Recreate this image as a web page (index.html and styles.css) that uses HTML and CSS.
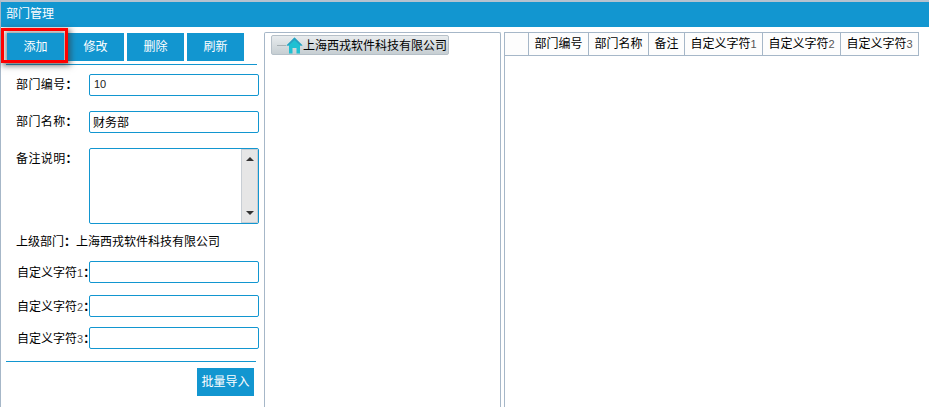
FILE: index.html
```html
<!DOCTYPE html>
<html lang="zh-CN">
<head>
    <meta charset="UTF-8">
    <title>部门管理</title>
    <link rel="stylesheet" href="styles.css">
</head>
<body>
    <div class="window">
        <div class="title">部门管理</div>
        <div class="main">
            <div class="left">
                <div class="toolbar">
                    <button class="button active">添加</button>
                    <button class="button">修改</button>
                    <button class="button">删除</button>
                    <button class="button">刷新</button>
                </div>
                <div class="form">
                    <div class="row">
                        <label>部门编号<span class="colon">：</span></label>
                        <input class="field small" type="text" value="10">
                    </div>
                    <div class="row">
                        <label>部门名称<span class="colon">：</span></label>
                        <input class="field" type="text" value="财务部">
                    </div>
                    <div class="row memo">
                        <label>备注说明<span class="colon">：</span></label>
                        <div class="area">
                            <div class="scroll">
                                <span class="arrow up"></span>
                                <span class="arrow down"></span>
                            </div>
                        </div>
                    </div>
                    <div class="parent">上级部门<span class="colon">：</span>上海西戎软件科技有限公司</div>
                    <div class="row custom">
                        <label>自定义字符<span class="num">1</span><span class="colon">：</span></label>
                        <input class="field" type="text">
                    </div>
                    <div class="row custom tight">
                        <label>自定义字符<span class="num">2</span><span class="colon">：</span></label>
                        <input class="field" type="text">
                    </div>
                    <div class="row custom">
                        <label>自定义字符<span class="num">3</span><span class="colon">：</span></label>
                        <input class="field" type="text">
                    </div>
                </div>
                <div class="footer">
                    <button class="button">批量导入</button>
                </div>
            </div>
            <div class="tree">
                <div class="node">
                    <span class="dash"></span>
                    <svg class="home" width="17" height="17" viewBox="0 0 17 17">
                        <path d="M8.5 0.5 L16.5 8.5 L14 8.5 L14 16.5 L10.5 16.5 L10.5 11 L6.5 11 L6.5 16.5 L3 16.5 L3 8.5 L0.5 8.5 Z" fill="#1fc0d2"/>
                        <path d="M8.5 0.5 L16.5 8.5 L14.5 8.5 L8.5 3 L2.5 8.5 L0.5 8.5 Z" fill="#2a9fc0"/>
                    </svg>
                    <span class="node-text">上海西戎软件科技有限公司</span>
                </div>
            </div>
            <div class="grid">
                <div class="grid-head">
                    <div class="cell c-check"></div>
                    <div class="cell c-60">部门编号</div>
                    <div class="cell c-60">部门名称</div>
                    <div class="cell c-36">备注</div>
                    <div class="cell c-78">自定义字符<span class="num">1</span></div>
                    <div class="cell c-78">自定义字符<span class="num">2</span></div>
                    <div class="cell c-78">自定义字符<span class="num">3</span></div>
                </div>
            </div>
        </div>
    </div>
</body>
</html>
```

FILE: styles.css
```css
html, body {
    margin: 0;
    padding: 0;
    height: 100%;
    overflow: hidden;
}
body {
    font-family: "Liberation Sans", "Noto Sans CJK SC", sans-serif;
    font-size: 12px;
    color: #000;
    background: #fff;
}
.window {
    height: 407px;
    box-sizing: border-box;
    border-left: 1px solid #a6b7c8;
    border-top: 2px solid #b5c2cf;
    display: flex;
    flex-direction: column;
}
.title {
    height: 25px;
    line-height: 24px;
    padding-left: 5px;
    background: #1296d0;
    color: #fff;
}
.main {
    flex: 1;
    display: flex;
    min-height: 0;
}
.left {
    width: 263px;
    flex-shrink: 0;
}
.toolbar {
    display: flex;
    gap: 3px;
    margin: 6px 0 0 5px;
    padding: 0 0 3px 1px;
    width: 250px;
    border-bottom: 1px solid #1296d0;
}
.button {
    width: 57px;
    height: 28px;
    padding: 0 0 3px;
    border: none;
    background: #1296d0;
    color: #fff;
    font: inherit;
}
.active {
    position: relative;
    z-index: 1;
    box-shadow: 0 0 5px 2px rgba(60, 60, 60, 0.55);
}
/* 红色标注框 */
.active::after {
    content: "";
    position: absolute;
    left: -6px;
    top: -5px;
    right: -4px;
    bottom: -2px;
    border: 3px solid #f00;
    box-shadow: 2px 2px 6px 1px rgba(60, 60, 60, 0.55);
}
.form {
    padding-top: 9px;
}
.row {
    display: flex;
    align-items: center;
    height: 22px;
    margin-bottom: 15px;
}
.row label {
    width: 88px;
    padding: 0 0 4px 15px;
    box-sizing: border-box;
    flex-shrink: 0;
    letter-spacing: 0.4px;
}
.colon {
    font-family: "Noto Sans CJK TC", sans-serif;
    font-weight: bold;
}
.field {
    width: 170px;
    height: 22px;
    box-sizing: border-box;
    border: 1px solid #1296d0;
    border-radius: 2px;
    padding: 0 3px 2px;
    font: inherit;
    outline: none;
}
.small {
    font-size: 11px;
    padding: 0 4px 3px;
    color: #222;
}
.memo {
    height: 76px;
    align-items: flex-start;
    margin-bottom: 0;
}
.memo label {
    padding-top: 1px;
}
.area {
    width: 170px;
    height: 76px;
    box-sizing: border-box;
    border: 1px solid #1296d0;
    border-radius: 2px;
    display: flex;
    justify-content: flex-end;
}
.scroll {
    width: 17px;
    background: #e6e6e6;
    border: 1px solid #c8ced4;
    box-sizing: border-box;
    display: flex;
    flex-direction: column;
    justify-content: space-between;
    align-items: center;
    padding: 7px 0;
}
.arrow {
    width: 0;
    height: 0;
    border-left: 4px solid transparent;
    border-right: 4px solid transparent;
}
.up {
    border-bottom: 4px solid #333;
}
.down {
    border-top: 4px solid #333;
}
.parent {
    height: 17px;
    line-height: 17px;
    margin: 8px 0 12px 15px;
}
.custom {
    margin-bottom: 12px;
}
.tight {
    margin-bottom: 10px;
}
.custom label {
    padding-left: 16px;
    padding-bottom: 2px;
    letter-spacing: 0;
    white-space: nowrap;
}
.num {
    color: #555;
    font-size: 11px;
}
.footer {
    margin-left: 5px;
    width: 250px;
    border-top: 1px solid #1296d0;
    padding-top: 6px;
    display: flex;
    justify-content: flex-end;
    padding-right: 2px;
    box-sizing: border-box;
}
.tree {
    width: 237px;
    flex-shrink: 0;
    box-sizing: border-box;
    margin-top: 5px;
    border: 1px solid #a6b7c8;
    border-bottom: none;
    border-radius: 2px 2px 0 0;
    padding: 2px 0 0 6px;
}
.node {
    width: 178px;
    height: 20px;
    box-sizing: border-box;
    display: flex;
    align-items: center;
    border: 1px solid #b6c0c8;
    border-radius: 2px;
    background: linear-gradient(#e8ecee, #c6ced2);
}
.node-text {
    padding-bottom: 2px;
}
.dash {
    width: 9px;
    height: 1px;
    margin-left: 5px;
    background: #a8b0b4;
}
.grid {
    flex: 1;
    margin: 5px 0 0 3px;
    border-left: 1px solid #a6b7c8;
}
.grid-head {
    display: flex;
    width: max-content;
    height: 24px;
    box-sizing: border-box;
    border-top: 1px solid #a6b7c8;
    border-bottom: 1px solid #a6b7c8;
}
.cell {
    box-sizing: border-box;
    border-right: 1px solid #a6b7c8;
    text-align: center;
    line-height: 22px;
    white-space: nowrap;
    background: #fdfdfd;
}
.c-check {
    width: 24px;
}
.c-60 {
    width: 60px;
}
.c-36 {
    width: 36px;
}
.c-78 {
    width: 78px;
}
```
